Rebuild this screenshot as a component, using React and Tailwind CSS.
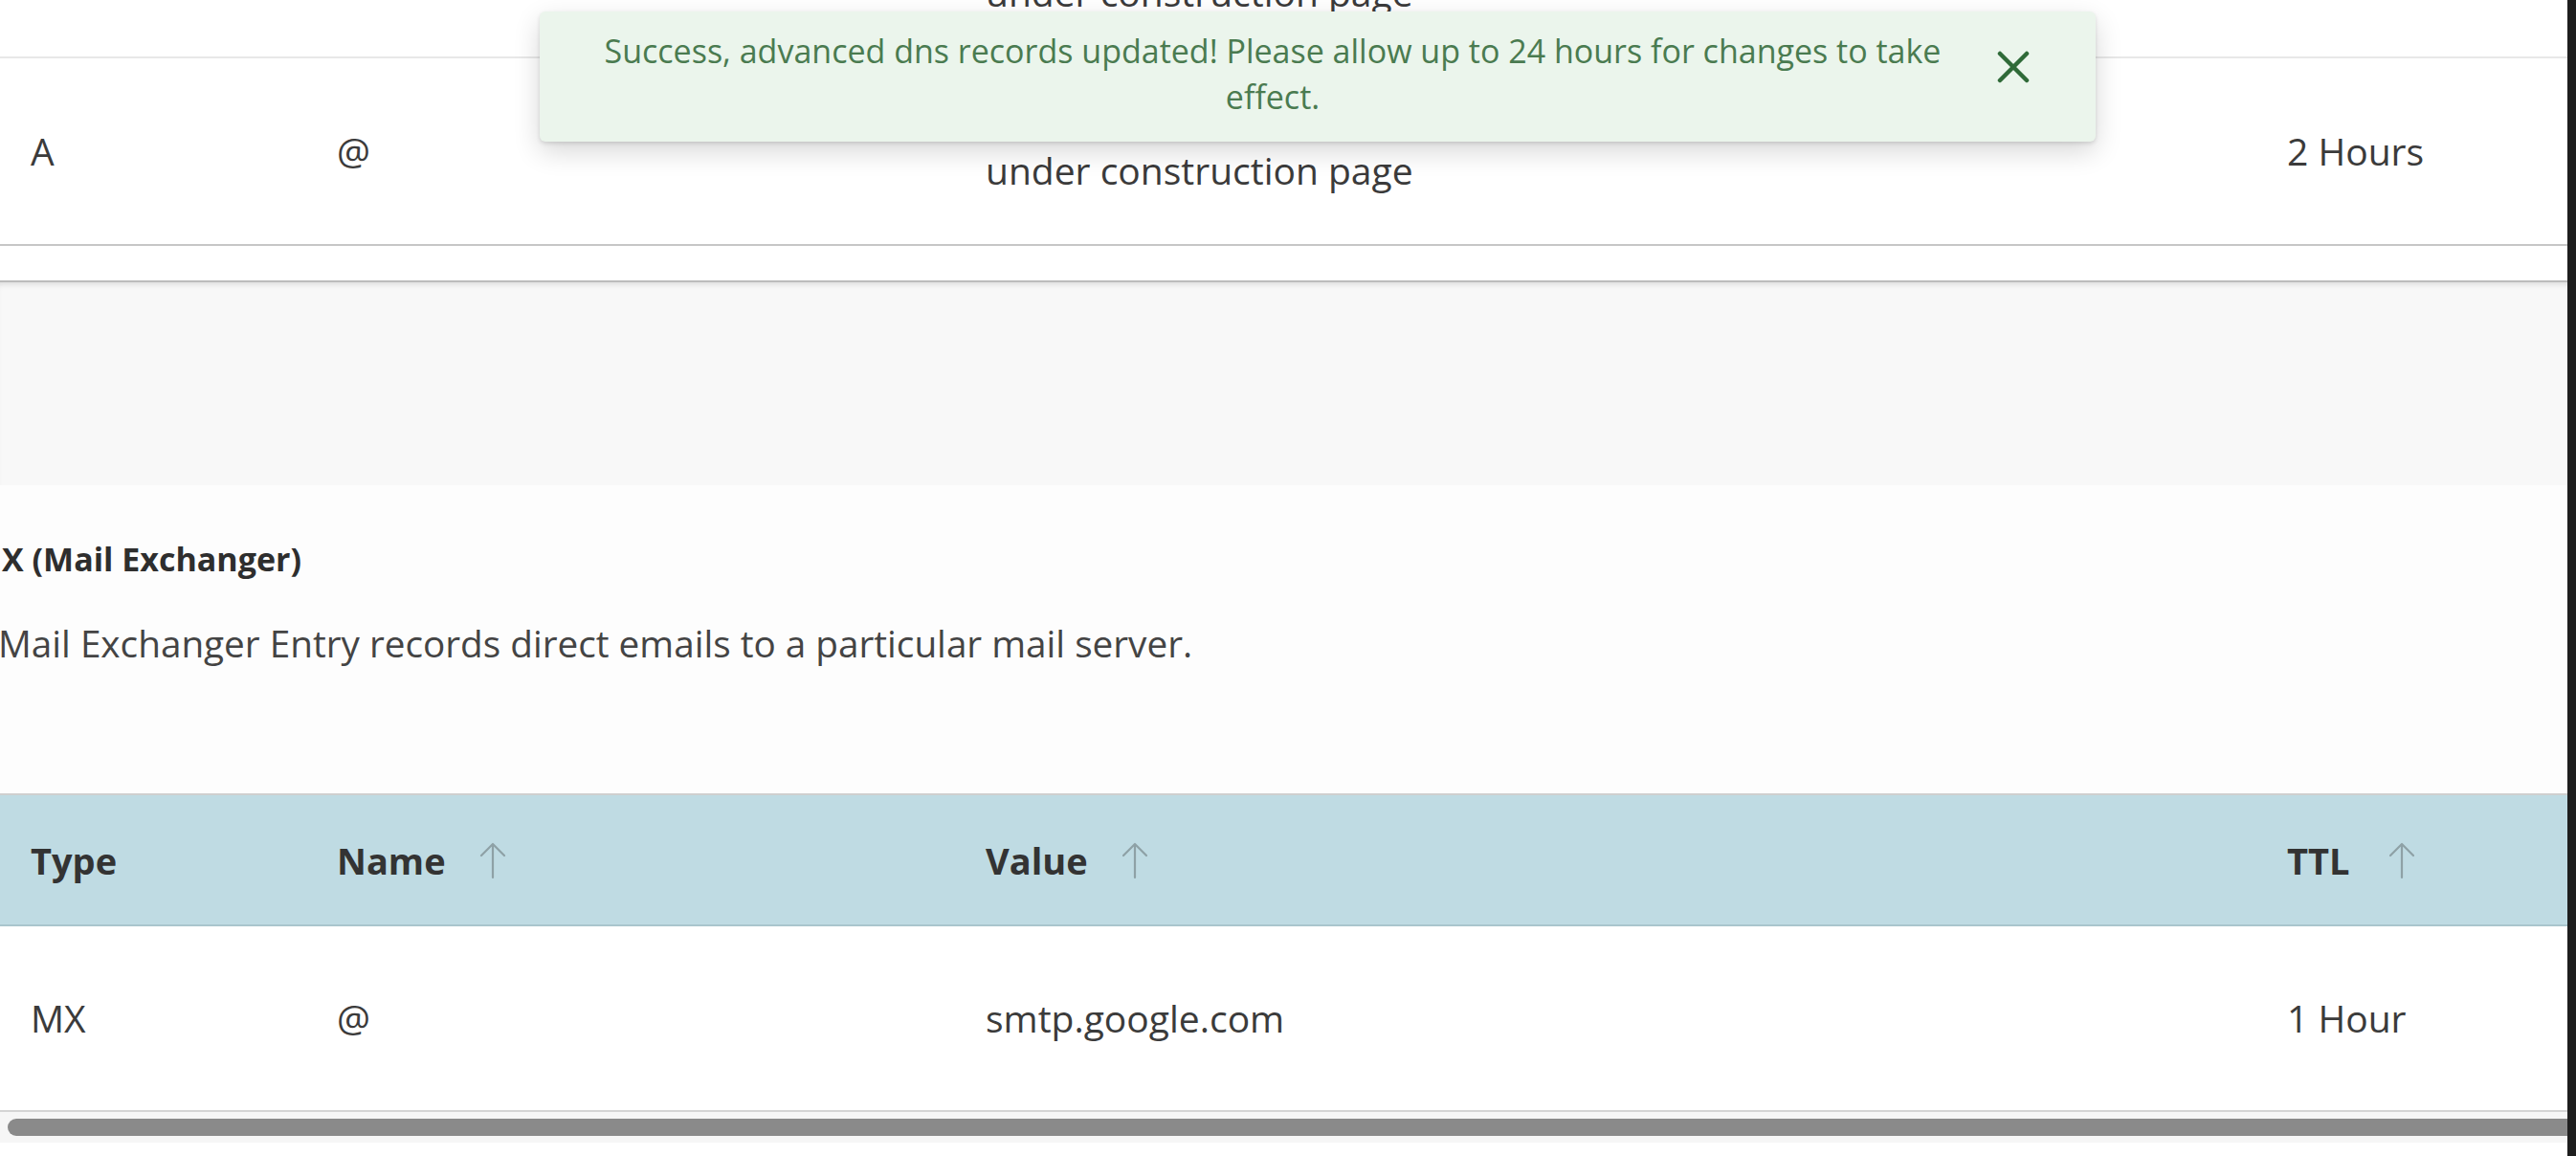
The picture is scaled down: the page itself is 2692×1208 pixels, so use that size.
import React from "react";

const cols = "grid grid-cols-[320px_678px_1360px_1fr] pl-[32px]";

function SortArrow() {
  return (
    <svg width="30" height="40" viewBox="0 0 30 40" fill="none" className="shrink-0">
      <path d="M15 38 V3 M3 15 L15 3 L27 15" stroke="#8ea1a6" strokeWidth="2.2" strokeLinecap="round" strokeLinejoin="round" />
    </svg>
  );
}

function HeaderCell({ label, sort, gap = "gap-[34px]" }) {
  return (
    <div className={`flex items-center ${gap}`}>
      <span className="font-bold">{label}</span>
      {sort && <SortArrow />}
    </div>
  );
}

export default function App() {
  return (
    <div
      className="relative flex h-[1208px] w-full overflow-hidden bg-white text-[#3b3b3b]"
      style={{ fontFamily: '"Open Sans", "Noto Sans", sans-serif' }}
    >
      <div className="flex min-w-0 flex-1 flex-col overflow-hidden">
        {/* previous row stub */}
        <div className="h-[59px] overflow-hidden">
          <div className={`${cols} mt-[-31px] text-[39px] leading-[46px]`}>
            <div />
            <div />
            <div className="whitespace-nowrap">under construction page</div>
            <div />
          </div>
        </div>
        <div className="h-[2px] bg-[#e8e8e8]" />

        {/* row A */}
        <div className={`${cols} h-[194px] items-center text-[39px] leading-[46px]`}>
          <div>A</div>
          <div>@</div>
          <div className="self-start whitespace-nowrap pt-[38px]">
            <div className="mb-[10px]">Redirects to the default</div>
            <div>under construction page</div>
          </div>
          <div>2 Hours</div>
        </div>
        <div className="h-[2px] bg-[#c6c6c6]" />
        <div className="h-[36px] bg-white" />
        <div className="h-[2px] bg-[#bcbcbc]" />
        <div className="h-[212px] bg-[#f8f8f8] shadow-[inset_0_6px_6px_-4px_rgba(0,0,0,0.12)]" />

        {/* MX section */}
        <div className="bg-[#fdfdfd]">
          <div className="ml-[-30px] pt-[54px] text-[34px] font-bold leading-[46px] text-[#2e2e2e] whitespace-nowrap">
            MX (Mail Exchanger)
          </div>
          <div className="ml-[-2px] mt-[42px] text-[38.7px] leading-[46px] text-[#444] whitespace-nowrap">
            Mail Exchanger Entry records direct emails to a particular mail server.
          </div>
          <div className="h-[134px]" />

          <div className="h-[2px] bg-[#cfcfcf]" />
          <div className={`${cols} h-[135px] items-center bg-[#bfdbe3] text-[38px] leading-[46px] text-[#333]`}>
            <HeaderCell label="Type" />
            <HeaderCell label="Name" sort />
            <HeaderCell label="Value" sort />
            <HeaderCell label="TTL" sort gap="gap-[40px]" />
          </div>
          <div className="h-[2px] bg-[#a9c5cd]" />

          <div className={`${cols} h-[192px] items-center bg-white text-[39px] leading-[46px]`}>
            <div>MX</div>
            <div>@</div>
            <div className="whitespace-nowrap">smtp.google.com</div>
            <div>1 Hour</div>
          </div>
          <div className="h-[2px] bg-[#d4d4d4]" />
          <div className="flex h-[32px] items-center bg-[#f6f6f6] pl-[8px]">
            <div className="h-[18px] flex-1 rounded-l-full bg-[#8a8a8a]" />
          </div>
        </div>
        <div className="flex-1 bg-white" />
      </div>
      <div className="w-[9px] shrink-0 bg-[#1e1e1e]" />

      {/* toast */}
      <div className="absolute left-[564px] top-[12px] flex h-[136px] w-[1626px] items-start rounded-[6px] bg-[#ebf5ec] pl-[40px] pr-[69px] pt-[17px] shadow-[0_10px_28px_rgba(0,0,0,0.16),0_2px_4px_rgba(0,0,0,0.12)]">
        <div className="flex-1 text-center text-[34px] leading-[48px] text-[#4a7b50]">
          Success, advanced dns records updated! Please allow up to 24 hours for changes to take effect.
        </div>
        <button className="ml-[31px] mt-[24px] flex h-[34px] w-[34px] items-center justify-center">
          <svg width="34" height="34" viewBox="0 0 34 34" fill="none">
            <path d="M3 3 L31 31 M31 3 L3 31" stroke="#2f6a38" strokeWidth="4.5" strokeLinecap="round" />
          </svg>
        </button>
      </div>
    </div>
  );
}
